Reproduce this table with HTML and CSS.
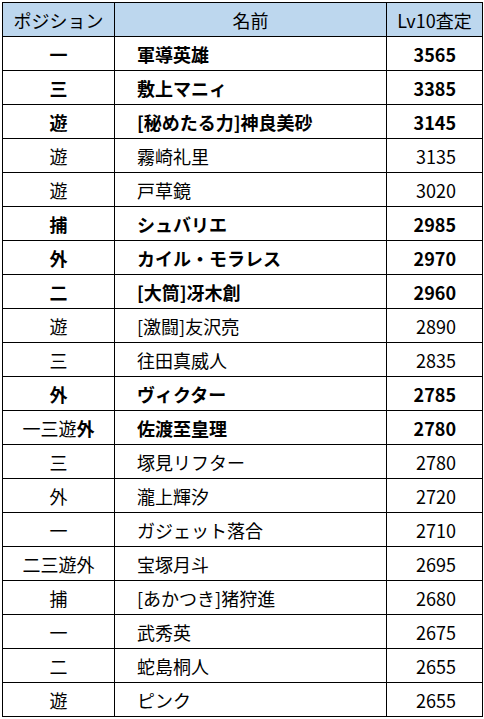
FILE: index.html
```html
<!DOCTYPE html>
<html lang="ja">
<head>
<meta charset="utf-8">
<link rel="stylesheet" href="styles.css">
</head>
<body>
<table class="sheet">
  <colgroup><col class="c-pos"><col class="c-name"><col class="c-val"></colgroup>
  <thead>
    <tr><th>ポジション</th><th>名前</th><th>Lv10査定</th></tr>
  </thead>
  <tbody>
    <tr class="b"><td class="pos">一</td><td class="name">軍導英雄</td><td class="val">3565</td></tr>
    <tr class="b"><td class="pos">三</td><td class="name">敷上マニィ</td><td class="val">3385</td></tr>
    <tr class="b"><td class="pos">遊</td><td class="name">[秘めたる力]神良美砂</td><td class="val">3145</td></tr>
    <tr><td class="pos">遊</td><td class="name">霧崎礼里</td><td class="val">3135</td></tr>
    <tr><td class="pos">遊</td><td class="name">戸草鏡</td><td class="val">3020</td></tr>
    <tr class="b"><td class="pos">捕</td><td class="name">シュバリエ</td><td class="val">2985</td></tr>
    <tr class="b"><td class="pos">外</td><td class="name">カイル・モラレス</td><td class="val">2970</td></tr>
    <tr class="b"><td class="pos">二</td><td class="name">[大筒]冴木創</td><td class="val">2960</td></tr>
    <tr><td class="pos">遊</td><td class="name">[激闘]友沢亮</td><td class="val">2890</td></tr>
    <tr><td class="pos">三</td><td class="name">往田真威人</td><td class="val">2835</td></tr>
    <tr class="b"><td class="pos">外</td><td class="name">ヴィクター</td><td class="val">2785</td></tr>
    <tr><td class="pos">一三遊<strong>外</strong></td><td class="name strong">佐渡至皇理</td><td class="val strong">2780</td></tr>
    <tr><td class="pos">三</td><td class="name">塚見リフター</td><td class="val">2780</td></tr>
    <tr><td class="pos">外</td><td class="name">瀧上輝汐</td><td class="val">2720</td></tr>
    <tr><td class="pos">一</td><td class="name">ガジェット落合</td><td class="val">2710</td></tr>
    <tr><td class="pos">二三遊外</td><td class="name">宝塚月斗</td><td class="val">2695</td></tr>
    <tr><td class="pos">捕</td><td class="name">[あかつき]猪狩進</td><td class="val">2680</td></tr>
    <tr><td class="pos">一</td><td class="name">武秀英</td><td class="val">2675</td></tr>
    <tr><td class="pos">二</td><td class="name">蛇島桐人</td><td class="val">2655</td></tr>
    <tr><td class="pos">遊</td><td class="name">ピンク</td><td class="val">2655</td></tr>
  </tbody>
</table>
</body>
</html>
```
FILE: styles.css
```css
html, body {
  margin: 0;
  padding: 0;
  background: #ffffff;
}
body {
  padding: 2px;
  font-family: "Noto Sans CJK JP", "Noto Sans", sans-serif;
  font-size: 18px;
  color: #000000;
}
.sheet {
  border-collapse: collapse;
  table-layout: fixed;
  width: 480px;
}
.c-pos { width: 112px; }
.c-name { width: 272px; }
.c-val { width: 96px; }
.sheet th, .sheet td {
  border: 1px solid #000000;
  height: 33px;
  padding: 0;
  line-height: 20px;
  white-space: nowrap;
  overflow: hidden;
}
.sheet th {
  background: #bdd7ee;
  font-weight: normal;
  text-align: center;
}
.pos { text-align: center; }
.name { text-align: left; padding-left: 22px !important; }
.val { text-align: right; padding-right: 26px !important; }
.b td, .strong, strong { font-weight: bold; }
```
